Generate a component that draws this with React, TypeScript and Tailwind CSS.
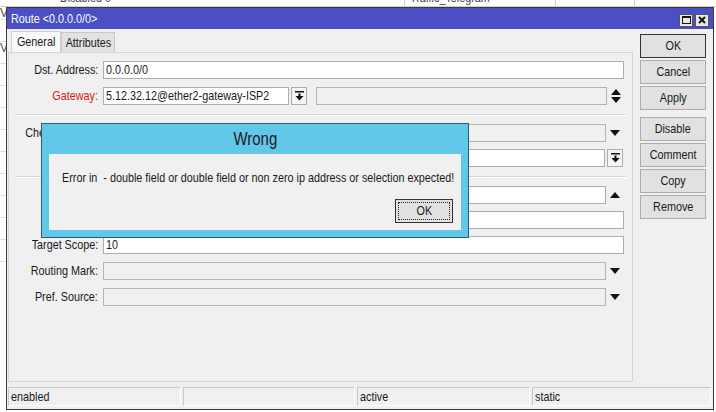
import React from 'react';

const font = { fontFamily: '"Liberation Sans", Arial, sans-serif' };

// the reference text is a narrow face; squeeze Liberation Sans to match its width
const T = ({ children, o = 'l' }: { children: React.ReactNode; o?: 'l' | 'r' | 'c' }) => (
  <span
    className={`inline-block whitespace-nowrap scale-x-[0.83] ${
      o === 'l' ? 'origin-left' : o === 'r' ? 'origin-right' : 'origin-center'
    }`}
  >
    {children}
  </span>
);

const DownArrow = () => (
  <svg width="10" height="6" viewBox="0 0 10 6">
    <polygon points="0,0 10,0 5,6" fill="#111" />
  </svg>
);

const UpArrow = () => (
  <svg width="10" height="6" viewBox="0 0 10 6">
    <polygon points="0,6 10,6 5,0" fill="#111" />
  </svg>
);

const UpDown = () => (
  <svg width="10" height="14" viewBox="0 0 10 14">
    <polygon points="0,6 10,6 5,0" fill="#111" />
    <polygon points="0,8 10,8 5,14" fill="#111" />
  </svg>
);

const BarDown = () => (
  <svg width="9" height="10" viewBox="0 0 9 10">
    <rect x="0" y="0" width="9" height="1.5" fill="#111" />
    <rect x="3.5" y="2.5" width="2" height="3" fill="#111" />
    <polygon points="0.5,5 8.5,5 4.5,9.5" fill="#111" />
  </svg>
);

const Label = ({ text, red }: { text?: string; red?: boolean }) => (
  <div className={`w-[89px] shrink-0 text-right ${red ? 'text-[#d42020]' : 'text-[#1a1a1a]'}`}>
    {text ? <T o="r">{text}</T> : null}
  </div>
);

const Field = ({ value, disabled, w }: { value?: string; disabled?: boolean; w: string }) => (
  <div
    className={`${w} h-[18px] shrink-0 border flex items-center px-[2px] ${
      disabled ? 'bg-[#f0f0f0] border-[#b4b4b4]' : 'bg-white border-[#abadb3]'
    }`}
  >
    {value ? <T>{value}</T> : null}
  </div>
);

const DropBtn = () => (
  <div className="w-[16px] h-[18px] shrink-0 border border-[#abadb3] bg-[#f4f4f4] flex items-center justify-center">
    <BarDown />
  </div>
);

const ArrowSlot = ({ children }: { children: React.ReactNode }) => (
  <div className="w-[18px] h-[18px] shrink-0 flex items-center justify-center">{children}</div>
);

const Row = ({ children, mt = 'mt-[8px]' }: { children: React.ReactNode; mt?: string }) => (
  <div className={`flex items-center h-[18px] ${mt}`}>{children}</div>
);

const Sep = () => <div className="mx-[6px] mt-[9px] border-t border-[#d5d5d5] border-b border-b-white" />;

const SideBtn = ({ text, main, mt = 'mt-[2px]' }: { text: string; main?: boolean; mt?: string }) => (
  <div
    className={`w-[66px] h-[24px] flex items-center justify-center bg-[#e1e1e1] border ${
      main ? 'border-[#333]' : 'border-[#adadad]'
    } ${mt}`}
  >
    <T o="c">{text}</T>
  </div>
);

export default function App() {
  return (
    <div className="w-[716px] h-[412px] relative overflow-hidden bg-white text-[13px] text-[#1a1a1a]" style={font}>
      {/* background list behind the window */}
      <div className="absolute left-0 top-0 w-[716px] h-[7px] border-b border-[#cfcfcf]">
        <div className="absolute left-[60px] top-[-12px] text-[#444]">
          <T>Disabled 0</T>
        </div>
        <div className="absolute left-[410px] top-[-12px] text-[#444]">
          <T>Traffic_Telegram</T>
        </div>
        <div className="absolute left-[404px] top-0 h-[7px] border-l border-[#cfcfcf]" />
        <div className="absolute left-[555px] top-0 h-[7px] border-l border-[#cfcfcf]" />
        <div className="absolute left-[634px] top-0 h-[7px] border-l border-[#cfcfcf]" />
      </div>
      <div className="absolute left-0 top-[7px] w-[6px] h-[405px] flex flex-col">
        <div className="h-[13px] border-b border-[#dcdcdc] text-[12px] leading-[12px] text-[#555]">V</div>
        <div className="h-[22px] border-b border-[#dcdcdc]" />
        <div className="h-[22px] border-b border-[#dcdcdc] text-[12px] leading-[12px] text-[#555]">V</div>
        <div className="h-[22px] border-b border-[#dcdcdc]" />
        <div className="h-[22px] border-b border-[#dcdcdc]" />
        <div className="h-[22px] border-b border-[#dcdcdc]" />
        <div className="h-[22px] border-b border-[#dcdcdc]" />
        <div className="h-[22px] border-b border-[#dcdcdc]" />
        <div className="h-[22px] border-b border-[#dcdcdc]" />
        <div className="h-[22px] border-b border-[#dcdcdc]" />
        <div className="h-[22px] border-b border-[#dcdcdc]" />
        <div className="h-[22px] border-b border-[#dcdcdc]" />
      </div>
      <div className="absolute right-0 top-[7px] w-[3px] h-[405px] border-l border-[#cfcfcf]" />

      {/* window */}
      <div className="absolute left-[6px] top-[7px] w-[708px] h-[403px] border border-[#3a3a3a] bg-[#f0f0f0] flex flex-col">
        <div className="h-[21px] shrink-0 bg-[#4a4fc6] flex items-center justify-between pl-[4px] pr-[4px]">
          <span className="text-white text-[13px]">
            <T>Route &lt;0.0.0.0/0&gt;</T>
          </span>
          <div className="flex gap-[2px] mt-[3px]">
            <div className="w-[14px] h-[13px] bg-[#e8e8e8] border border-[#555] flex items-center justify-center">
              <div className="w-[9px] h-[8px] border border-[#111] border-t-2" />
            </div>
            <div className="w-[14px] h-[13px] bg-[#e8e8e8] border border-[#555] flex items-center justify-center">
              <svg width="8" height="8" viewBox="0 0 8 8">
                <path d="M1 1 L7 7 M7 1 L1 7" stroke="#111" strokeWidth="2" />
              </svg>
            </div>
          </div>
        </div>

        <div className="flex flex-1">
          {/* left side: tabs and panel */}
          <div className="w-[626px] pl-[1px] flex flex-col">
            <div className="flex items-end h-[23px] pl-[3px]">
              <div className="w-[50px] h-[21px] bg-[#f8f8f8] border border-b-0 border-[#d0d0d0] flex items-center justify-center">
                <T o="c">General</T>
              </div>
              <div className="w-[54px] h-[20px] bg-[#e2e2e2] border border-b-0 border-[#c8c8c8] flex items-center justify-center">
                <T o="c">Attributes</T>
              </div>
            </div>
            <div className="w-[625px] h-[330px] border border-[#d4d4d4] bg-[#f0f0f0]">
              <Row mt="mt-[8px]">
                <Label text="Dst. Address:" />
                <div className="w-[5px]" />
                <Field w="w-[521px]" value="0.0.0.0/0" />
              </Row>
              <Row>
                <Label text="Gateway:" red />
                <div className="w-[5px]" />
                <Field w="w-[186px]" value="5.12.32.12@ether2-gateway-ISP2" />
                <div className="w-[2px]" />
                <DropBtn />
                <div className="w-[9px]" />
                <Field w="w-[291px]" disabled />
                <ArrowSlot>
                  <UpDown />
                </ArrowSlot>
              </Row>
              <Sep />
              <Row>
                <Label text="Check Gateway:" />
                <div className="w-[5px]" />
                <Field w="w-[503px]" disabled />
                <ArrowSlot>
                  <DownArrow />
                </ArrowSlot>
              </Row>
              <Row mt="mt-[7px]">
                <Label text="" />
                <div className="w-[5px]" />
                <Field w="w-[502px]" />
                <div className="w-[2px]" />
                <DropBtn />
              </Row>
              <Sep />
              <Row>
                <Label text="Distance:" />
                <div className="w-[5px]" />
                <Field w="w-[503px]" value="1" />
                <ArrowSlot>
                  <UpArrow />
                </ArrowSlot>
              </Row>
              <Row mt="mt-[7px]">
                <Label text="Scope:" />
                <div className="w-[5px]" />
                <Field w="w-[521px]" value="30" />
              </Row>
              <Row mt="mt-[7px]">
                <Label text="Target Scope:" />
                <div className="w-[5px]" />
                <Field w="w-[521px]" value="10" />
              </Row>
              <Row>
                <Label text="Routing Mark:" />
                <div className="w-[5px]" />
                <Field w="w-[503px]" disabled />
                <ArrowSlot>
                  <DownArrow />
                </ArrowSlot>
              </Row>
              <Row>
                <Label text="Pref. Source:" />
                <div className="w-[5px]" />
                <Field w="w-[503px]" disabled />
                <ArrowSlot>
                  <DownArrow />
                </ArrowSlot>
              </Row>
            </div>
          </div>

          {/* right side: buttons */}
          <div className="flex flex-col pl-[7px] pt-[5px]">
            <SideBtn text="OK" main mt="mt-0" />
            <SideBtn text="Cancel" />
            <SideBtn text="Apply" />
            <SideBtn text="Disable" mt="mt-[7px]" />
            <SideBtn text="Comment" />
            <SideBtn text="Copy" />
            <SideBtn text="Remove" />
          </div>
        </div>

        {/* status bar */}
        <div className="h-[24px] shrink-0 flex gap-[2px] pl-[1px] pr-[2px] pt-[2px] pb-[3px]">
          <div className="w-[173px] border border-[#c8c8c8] border-r-white border-b-white px-[2px] flex items-center">
            <T>enabled</T>
          </div>
          <div className="w-[172px] border border-[#c8c8c8] border-r-white border-b-white px-[2px] flex items-center" />
          <div className="w-[173px] border border-[#c8c8c8] border-r-white border-b-white px-[2px] flex items-center">
            <T>active</T>
          </div>
          <div className="flex-1 border border-[#c8c8c8] border-r-white border-b-white px-[2px] flex items-center">
            <T>static</T>
          </div>
        </div>
      </div>

      {/* error dialog */}
      <div className="absolute left-[41px] top-[123px] w-[428px] h-[115px] bg-[#63c7e9] border border-[#2c5a78] flex flex-col px-[7px] pb-[7px]">
        <div className="h-[30px] shrink-0 flex items-center justify-center text-[18px] text-[#1a1a1a]">
          <T o="c">Wrong</T>
        </div>
        <div className="flex-1 bg-[#f0f0f0] relative pl-[13px] pt-[14px]">
          <T>Error in&nbsp;&nbsp;- double field or double field or non zero ip address or selection expected!</T>
          <div className="absolute right-[8px] bottom-[7px] w-[58px] h-[24px] border border-[#333] bg-[#e1e1e1] p-[2px]">
            <div className="w-full h-full border border-dotted border-[#222] flex items-center justify-center">
              <T o="c">OK</T>
            </div>
          </div>
        </div>
      </div>
    </div>
  );
}
